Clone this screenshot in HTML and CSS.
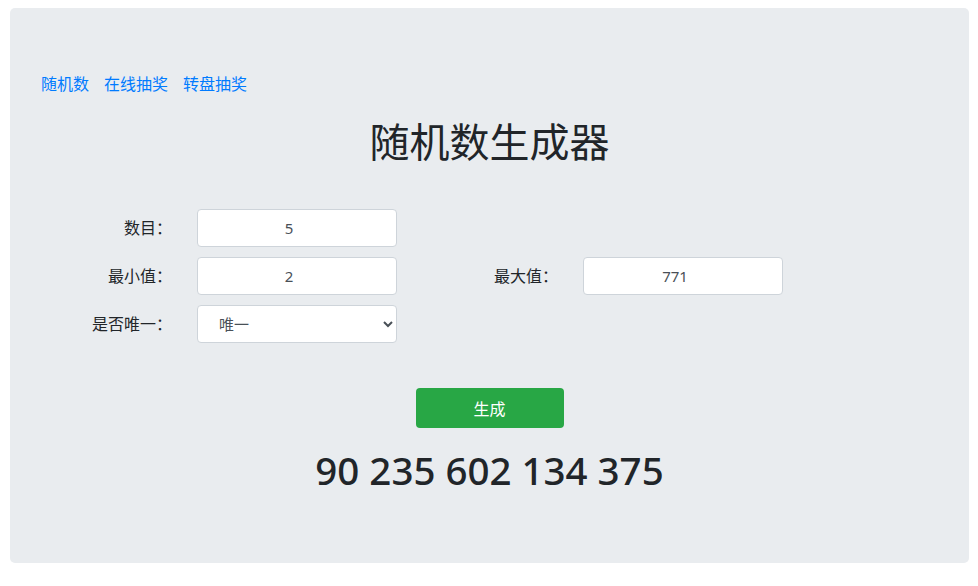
FILE: index.html
```html
<!DOCTYPE html>
<html lang="zh-CN">
<head>
  <meta charset="UTF-8">
  <meta name="viewport" content="width=device-width, initial-scale=1">
  <title>随机数生成器</title>
  <link rel="stylesheet" href="styles.css">
</head>
<body>

<div class="jumbotron">
  <nav class="links">
    <a href="#">随机数</a>
    <a href="#">在线抽奖</a>
    <a href="#">转盘抽奖</a>
  </nav>

  <h1>随机数生成器</h1>

  <div class="form-grid">
    <label for="count">数目：</label>
    <input type="text" id="count" value="5">
    <span></span>
    <span></span>

    <label for="min">最小值：</label>
    <input type="text" id="min" value="2">
    <label for="max">最大值：</label>
    <input type="text" id="max" value="771">

    <label for="unique">是否唯一：</label>
    <select id="unique">
      <option>唯一</option>
      <option>不唯一</option>
    </select>
  </div>

  <div class="actions">
    <button type="button">生成</button>
  </div>

  <div class="result">90 235 602 134 375</div>
</div>

</body>
</html>
```

FILE: styles.css
```css
* {
  box-sizing: border-box;
}
body {
  font-family: 'Noto Sans', 'Noto Sans CJK SC', sans-serif;
  font-size: 16px;
  line-height: 1.5;
  color: #212529;
  background: #fff;
  margin: 0;
  padding: 8px 9px 0 10px;
}
.jumbotron {
  background: #e9ecef;
  border-radius: 5px;
  padding: 64px 31px 69px;
}
.links {
  display: flex;
  gap: 15px;
}
.links a {
  color: #007bff;
  text-decoration: none;
}
h1 {
  text-align: center;
  font-family: 'Noto Sans CJK SC', sans-serif;
  font-size: 40px;
  font-weight: 400;
  line-height: 48px;
  margin: 20px 0 45px;
}
.form-grid {
  display: grid;
  grid-template-columns: 131px 200px 136px 200px;
  grid-auto-rows: 38px;
  column-gap: 25px;
  row-gap: 10px;
  align-items: center;
}
.form-grid label {
  text-align: right;
  color: #212529;
}
input,
select {
  width: 200px;
  height: 38px;
  font-family: 'Noto Sans', 'Noto Sans CJK SC', sans-serif;
  font-size: 15px;
  color: #495057;
  background: #fff;
  border: 1px solid #ced4da;
  border-radius: 4px;
  outline: none;
}
input {
  text-align: center;
  padding: 0 20px 0 4px;
}
select {
  padding: 0 8px 0 17px;
}
.actions {
  display: flex;
  justify-content: center;
  margin-top: 45px;
}
button {
  width: 148px;
  height: 40px;
  background: #28a745;
  color: #fff;
  border: none;
  border-radius: 4px;
  font-family: 'Noto Sans', 'Noto Sans CJK SC', sans-serif;
  font-size: 16px;
  cursor: pointer;
}
.result {
  text-align: center;
  font-size: 38.5px;
  font-weight: 500;
  line-height: 48px;
  margin-top: 18px;
}
```
